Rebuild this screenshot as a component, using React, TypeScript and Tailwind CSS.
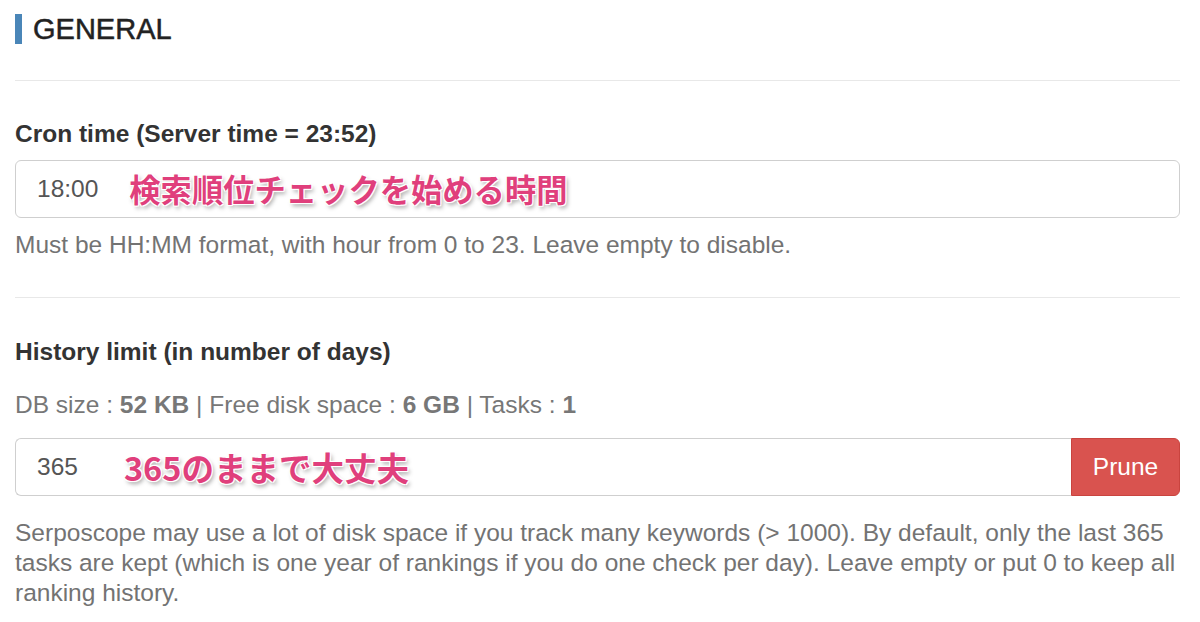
import React from "react";

const annot =
  "font-bold text-[#e03f7c] [font-family:'Noto_Sans_CJK_JP','Liberation_Sans',sans-serif] [text-shadow:0_0_2px_#fff,0_0_2px_#fff,1px_1px_0_#fff,-1px_-1px_0_#fff,1px_-1px_0_#fff,-1px_1px_0_#fff,2px_3px_4px_rgba(0,0,0,0.35)]";

export default function App() {
  return (
    <div className="w-[1200px] h-[622px] bg-white overflow-hidden pl-[15px] pr-[20px] pt-[14px] text-[24.5px] leading-[30px] text-[#333] [font-family:'Liberation_Sans',Arial,sans-serif]">
      <div className="flex items-center gap-[11px] h-[30px]">
        <div className="w-[7px] h-[30px] bg-[#4a86b8]" />
        <h2 className="text-[29px] leading-[30px] text-[#222] font-normal [-webkit-text-stroke:0.5px_#222]">GENERAL</h2>
      </div>
      <div className="mt-[36px] h-px bg-[#e8e8e8]" />

      <div className="mt-[38px] font-bold">Cron time (Server time = 23:52)</div>
      <div className="mt-[11px] h-[58px] border border-[#cfcfcf] rounded-[6px] flex items-center pl-[21px]">
        <span className="text-[#555]">18:00</span>
        <span className={`ml-[31px] text-[31.3px] leading-[40px] ${annot}`}>検索順位チェックを始める時間</span>
      </div>
      <div className="mt-[12px] text-[#737373]">
        Must be HH:MM format, with hour from 0 to 23. Leave empty to disable.
      </div>
      <div className="mt-[37px] h-px bg-[#e8e8e8]" />

      <div className="mt-[39px] font-bold">History limit (in number of days)</div>
      <div className="mt-[23px] text-[#777]">
        DB size : <b>52 KB</b> | Free disk space : <b>6 GB</b> | Tasks : <b>1</b>
      </div>
      <div className="mt-[18px] flex h-[58px]">
        <div className="flex-1 border border-[#cfcfcf] border-r-0 rounded-l-[6px] flex items-center pl-[21px]">
          <span className="text-[#555]">365</span>
          <span className={`ml-[46px] text-[32.5px] leading-[40px] ${annot}`}>365のままで大丈夫</span>
        </div>
        <button className="w-[109px] bg-[#d9534f] border border-[#c9443f] rounded-r-[6px] text-white">
          Prune
        </button>
      </div>
      <div className="mt-[22px] text-[#737373]">
        Serposcope may use a lot of disk space if you track many keywords (&gt; 1000). By default, only the last 365 tasks are kept (which is one year of rankings if you do one check per day). Leave empty or put 0 to keep all ranking history.
      </div>
    </div>
  );
}
